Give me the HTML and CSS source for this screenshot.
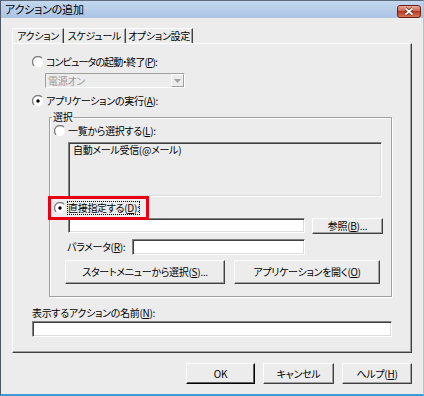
FILE: index.html
```html
<!DOCTYPE html>
<html lang="ja">
<head>
<meta charset="utf-8">
<title>アクションの追加</title>
<link rel="stylesheet" href="styles.css">
</head>
<body>
<div class="window">
  <div class="titlebar">
    <span class="title">アクションの追加</span>
    <svg class="close" width="24" height="13" viewBox="0 0 24 13">
      <defs>
        <linearGradient id="cg" x1="0" y1="0" x2="0" y2="1">
          <stop offset="0" stop-color="#eab0a2"/>
          <stop offset="0.45" stop-color="#d2654f"/>
          <stop offset="0.5" stop-color="#b83a22"/>
          <stop offset="1" stop-color="#da7c5c"/>
        </linearGradient>
      </defs>
      <rect x="0.5" y="0.5" width="23" height="12" rx="2.5" fill="url(#cg)" stroke="#6b2218"/>
      <path d="M8.5 3.5l7 6M15.5 3.5l-7 6" stroke="#5a1a10" stroke-width="3"/>
      <path d="M8.5 3.5l7 6M15.5 3.5l-7 6" stroke="#fff" stroke-width="1.7"/>
    </svg>
  </div>
  <div class="content">
    <div class="tabs">
      <div class="tab tab-active">アクション</div>
      <div class="tab tab-sched">スケジュール</div>
      <div class="tab tab-opt">オプション設定</div>
    </div>
    <div class="panel">
      <div class="radio r-power">
        <svg class="rb" width="12" height="12" viewBox="0 0 12 12"><circle cx="6" cy="6" r="5.2" fill="#fff"/><path d="M2.1 9.9A5.3 5.3 0 0 1 9.9 2.1" fill="none" stroke="#7d7d7d" stroke-width="1.3"/></svg>
        <span class="tight">コンピュータの起動・終了(<u>P</u>):</span>
      </div>
      <div class="select">
        <span class="select-text">電源オン</span>
        <span class="select-arrow"><svg width="7" height="4" viewBox="0 0 7 4"><path d="M0 0h7L3.5 4z" fill="#a0a0a0"/></svg></span>
      </div>
      <div class="radio r-app">
        <svg class="rb" width="12" height="12" viewBox="0 0 12 12"><circle cx="6" cy="6" r="5.2" fill="#fff"/><path d="M2.1 9.9A5.3 5.3 0 0 1 9.9 2.1" fill="none" stroke="#7d7d7d" stroke-width="1.3"/><circle cx="6" cy="6" r="1.7" fill="#000"/></svg>
        <span>アプリケーションの実行(<u>A</u>):</span>
      </div>
      <fieldset class="group">
        <legend class="group-title">選択</legend>
        <div class="radio r-list">
          <svg class="rb" width="12" height="12" viewBox="0 0 12 12"><circle cx="6" cy="6" r="5.2" fill="#fff"/><path d="M2.1 9.9A5.3 5.3 0 0 1 9.9 2.1" fill="none" stroke="#7d7d7d" stroke-width="1.3"/></svg>
          <span>一覧から選択する(<u>L</u>):</span>
        </div>
        <div class="listbox">自動メール受信(@メール)</div>
        <div class="radio r-direct">
          <svg class="rb" width="12" height="12" viewBox="0 0 12 12"><circle cx="6" cy="6" r="5.2" fill="#fff"/><path d="M2.1 9.9A5.3 5.3 0 0 1 9.9 2.1" fill="none" stroke="#7d7d7d" stroke-width="1.3"/><circle cx="6" cy="6" r="1.7" fill="#000"/></svg>
          <span class="focus">直接指定する(<u>D</u>):</span>
          <span class="highlight"></span>
        </div>
        <div class="row row-path">
          <div class="edit edit-path"></div>
          <div class="btn btn-browse">参照(<u>B</u>)...</div>
        </div>
        <div class="row row-param">
          <span class="param-label">パラメータ(<u>R</u>):</span>
          <div class="edit edit-param"></div>
        </div>
        <div class="row row-buttons">
          <div class="btn btn-start">スタートメニューから選択(<u>S</u>)...</div>
          <div class="btn btn-open">アプリケーションを開く(<u>O</u>)</div>
        </div>
      </fieldset>
      <div class="name-label">表示するアクションの名前(<u>N</u>):</div>
      <div class="edit edit-name"></div>
    </div>
    <div class="footer">
      <div class="btn btn-ok">OK</div>
      <div class="btn btn-cancel">キャンセル</div>
      <div class="btn btn-help">ヘルプ(<u>H</u>)</div>
    </div>
  </div>
</div>
</body>
</html>
```
FILE: styles.css
```css
* { box-sizing: border-box; }
html, body { margin: 0; padding: 0; }
body {
  font-family: "Noto Sans CJK JP", "Noto Sans", sans-serif;
  font-size: 10px;
  line-height: 14px;
  letter-spacing: -0.3px;
  color: #000;
  font-feature-settings: "palt";
}
u { text-decoration: underline; text-underline-offset: 1px; }

.window {
  width: 424px;
  height: 396px;
  background: #ececec;
  border-left: 1px solid #4e5866;
  border-top: 1px solid #5d6b7c;
  border-right: 1px solid #a9c4e4;
  border-bottom: 2px solid #3d9ad6;
  display: flex;
  flex-direction: column;
}

.titlebar {
  height: 17px;
  background: linear-gradient(#c4d7ef, #aac3e3);
  display: flex;
  align-items: flex-start;
  justify-content: space-between;
  padding: 0 2px 0 4px;
}
.title { line-height: 17px; font-size: 11px; letter-spacing: -0.2px; }
.close { margin-top: 4px; }

.content {
  padding: 10px 0 0 11px;
  display: flex;
  flex-direction: column;
}

.tabs { display: flex; height: 15px; }
.tab {
  height: 15px;
  line-height: 14px;
  text-align: center;
  border-top: 1px solid #fff;
  border-left: 1px solid #fff;
  border-right: 1px solid #404040;
  box-shadow: inset -1px 0 0 #a0a0a0;
  white-space: nowrap;
}
.tab-active { width: 52px; }
.tab-sched { width: 62px; border-left: none; }
.tab-opt { width: 67px; border-left: none; }

.panel {
  width: 400px;
  height: 310px;
  border: 1px solid;
  border-color: #fff #404040 #404040 #fff;
  box-shadow: inset -1px -1px 0 #a0a0a0;
  display: flex;
  flex-direction: column;
  align-items: flex-start;
}

.radio {
  display: flex;
  align-items: center;
  gap: 2px;
  height: 14px;
  white-space: nowrap;
}
.rb { flex: none; }
.tight { letter-spacing: -0.9px; }
.r-power { margin: 11px 0 0 19px; }
.r-app { margin: 6px 0 0 19px; }

.select {
  margin: 4px 0 0 32px;
  width: 140px;
  height: 15px;
  border: 1px solid;
  border-color: #a0a0a0 #fff #fff #a0a0a0;
  display: flex;
  align-items: center;
  justify-content: space-between;
  padding-left: 2px;
}
.select-text { color: #9b9b9b; line-height: 13px; }
.select-arrow {
  width: 13px;
  height: 13px;
  border: 1px solid;
  border-color: #fff #a0a0a0 #a0a0a0 #fff;
  display: flex;
  align-items: center;
  justify-content: center;
}

.group {
  margin: 2px 0 0 36px;
  padding: 0 0 12px 0;
  width: 343px;
  min-inline-size: 0;
  border: 1px solid #a0a0a0;
  box-shadow: inset 1px 1px 0 #fff, 1px 1px 0 #fff;
  display: flex;
  flex-direction: column;
  align-items: flex-start;
}
.group-title {
  margin-left: 2px;
  padding: 0 1px;
  line-height: 14px;
}
.r-list { margin: 0 0 0 4px; }

.listbox {
  margin: 4px 0 0 18px;
  width: 314px;
  height: 55px;
  border: 1px solid;
  border-color: #808080 #fff #fff #808080;
  box-shadow: inset 1px 1px 0 #404040, inset -1px -1px 0 #dcdcdc;
  padding: 0 0 0 4px;
  line-height: 13px;
}

.r-direct {
  margin: 4px 0 0 4px;
  position: relative;
}
.focus {
  outline: 1px dotted #000;
  outline-offset: -1px;
  padding: 0 1px;
  margin-left: -1px;
}
.highlight {
  position: absolute;
  left: -6px;
  top: -5px;
  width: 101px;
  height: 24px;
  border: 3px solid #e60012;
}

.row { display: flex; align-items: center; }
.row-path { margin: 3px 0 0 18px; gap: 7px; align-items: flex-start; }
.row-param { margin: 5px 0 0 17px; }
.row-buttons { margin: 5px 0 0 15px; gap: 9px; }

.edit {
  background: #fff;
  border: 1px solid;
  border-color: #808080 #fff #fff #808080;
  box-shadow: inset 1px 1px 0 #404040, inset -1px -1px 0 #dcdcdc;
}
.edit-path { width: 237px; height: 15px; }
.edit-param { width: 173px; height: 16px; }
.param-label { width: 65px; white-space: nowrap; }

.btn {
  background: #ececec;
  border: 1px solid;
  border-color: #fff #404040 #404040 #fff;
  box-shadow: inset -1px -1px 0 #a0a0a0;
  display: flex;
  align-items: center;
  justify-content: center;
  white-space: nowrap;
}
.btn-browse { width: 71px; height: 16px; }
.btn-start { width: 160px; height: 24px; }
.btn-open { width: 146px; height: 24px; }

.name-label { margin: 9px 0 0 19px; white-space: nowrap; }
.edit-name { margin: 1px 0 0 19px; width: 360px; height: 16px; }

.footer {
  width: 400px;
  display: flex;
  justify-content: flex-end;
  gap: 8px;
  margin-top: 10px;
}
.btn-ok { width: 69px; height: 21px; border-color: #fff #000 #000 #fff; box-shadow: inset -1px -1px 0 #606060; }
.btn-cancel { width: 71px; height: 21px; }
.btn-help { width: 70px; height: 21px; }
```
